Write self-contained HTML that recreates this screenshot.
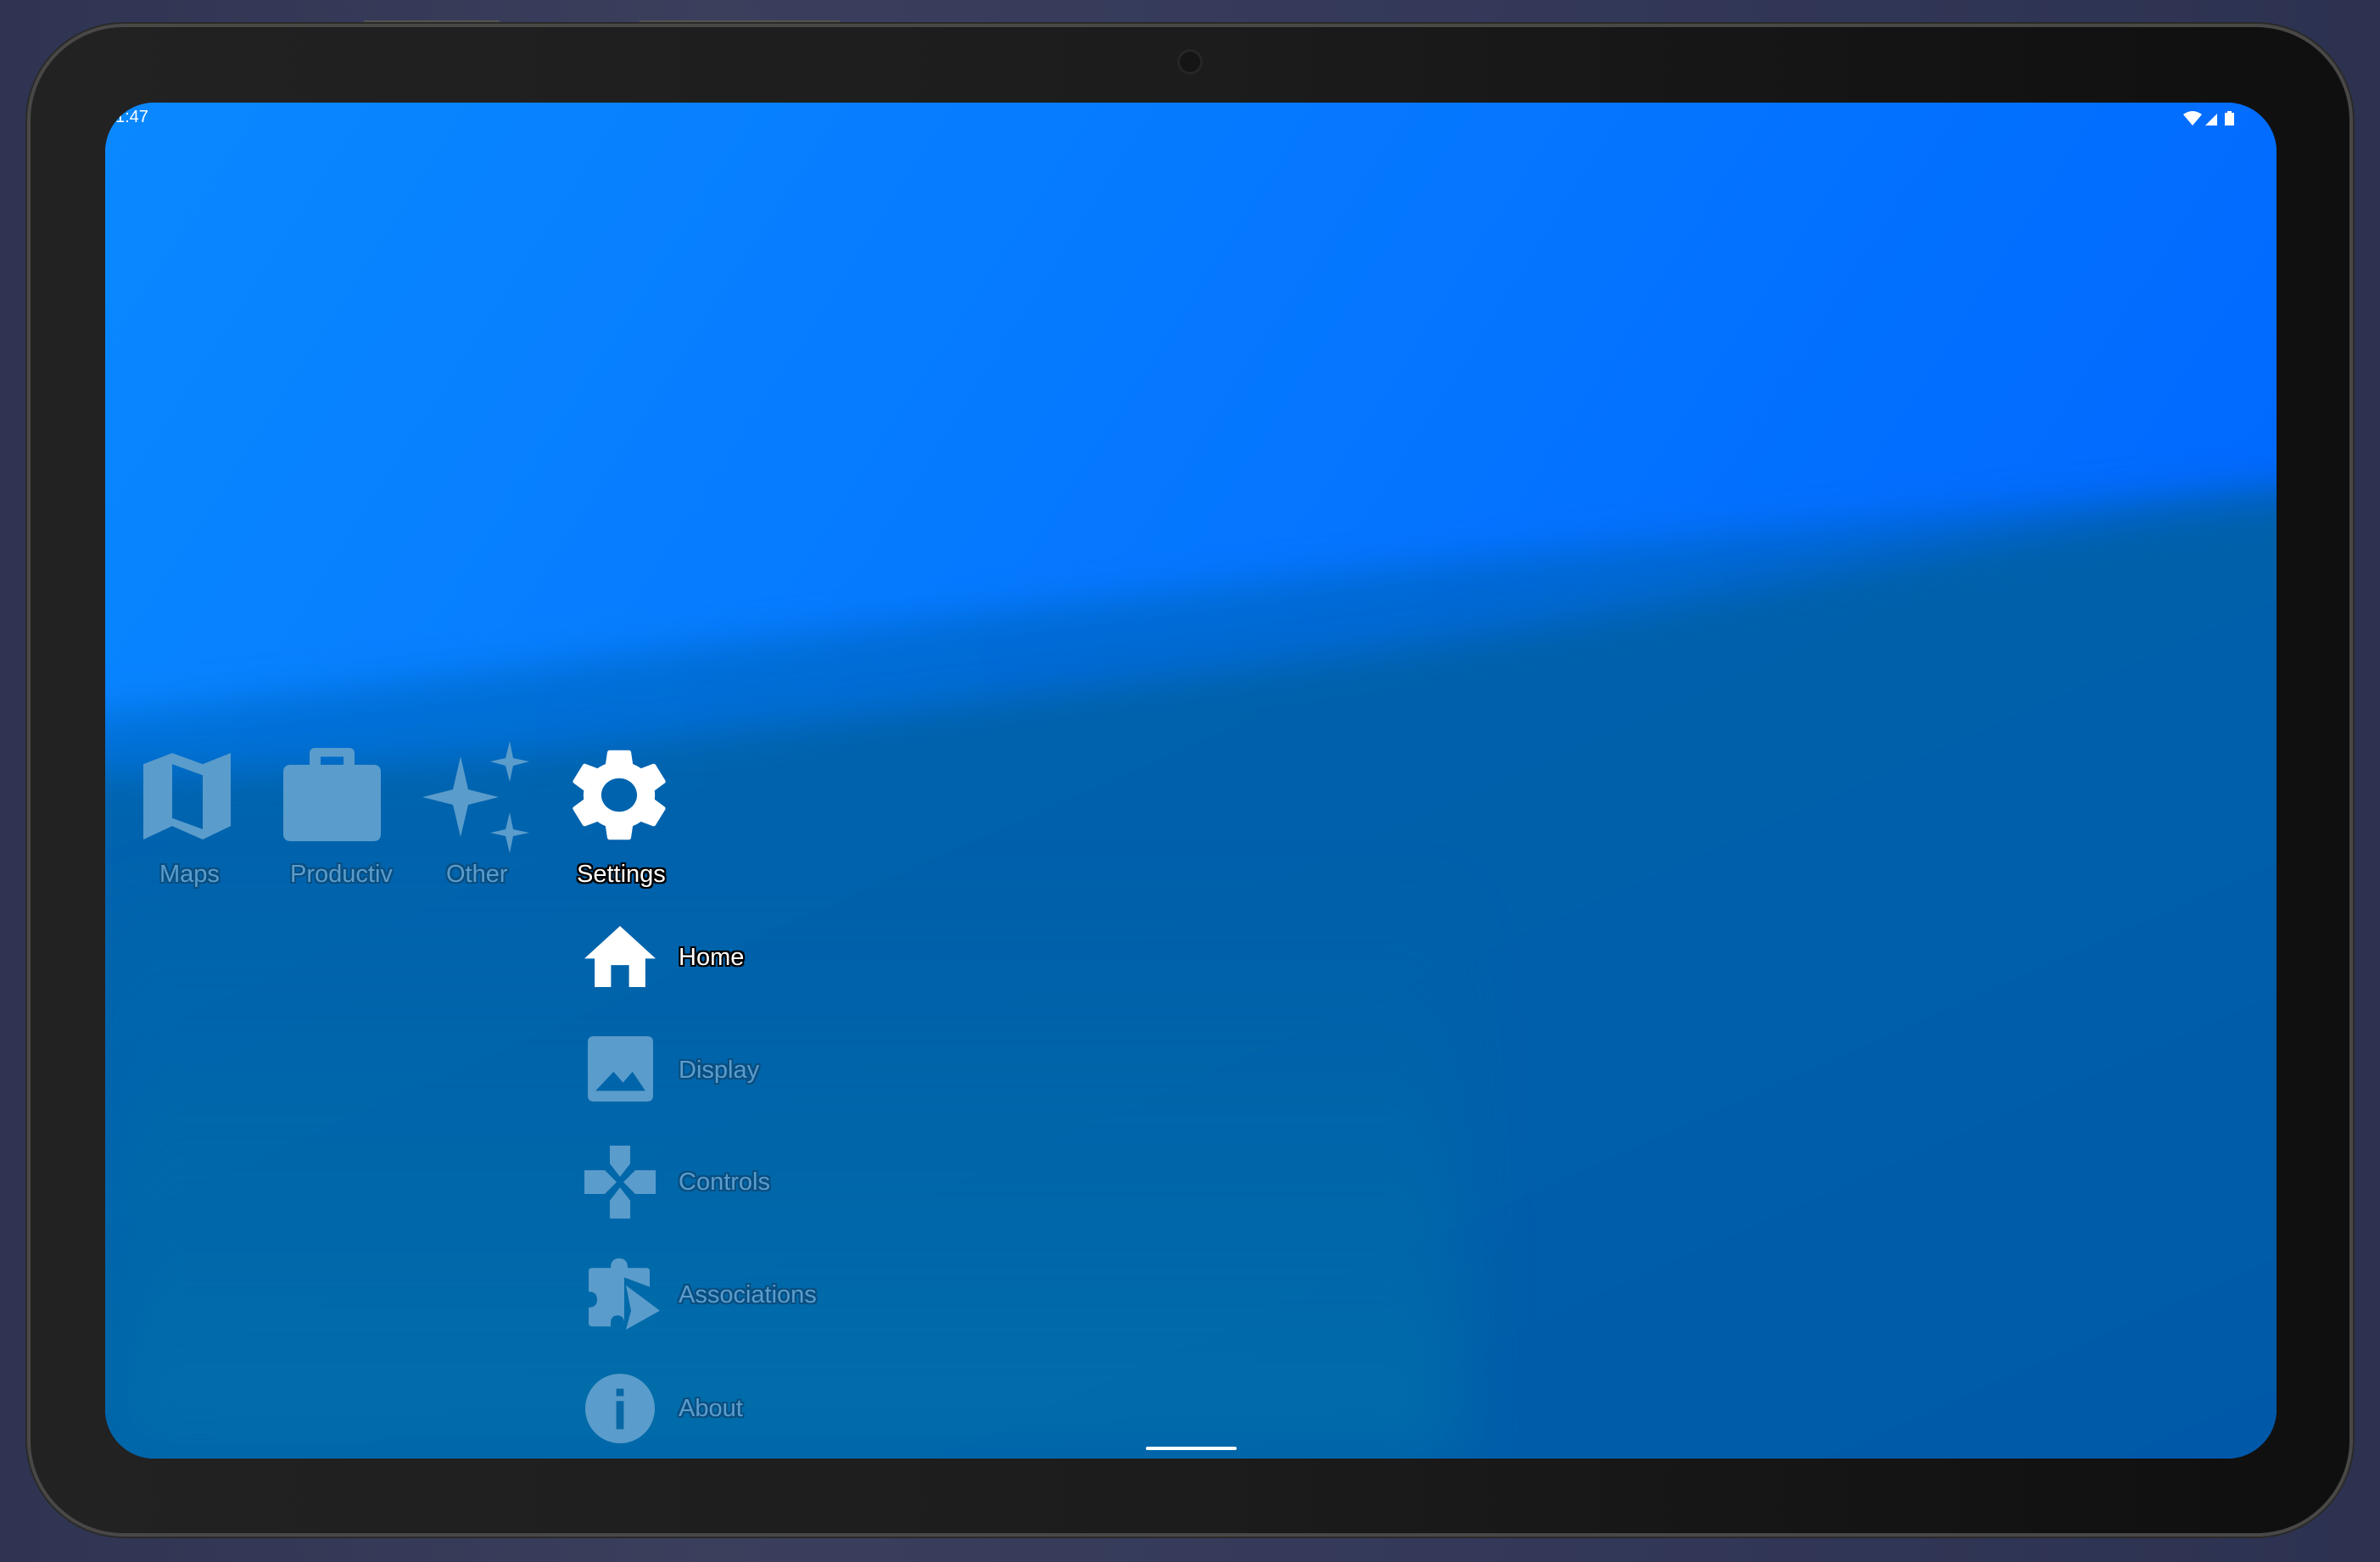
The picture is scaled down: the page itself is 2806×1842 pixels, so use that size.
<!DOCTYPE html>
<html><head><meta charset="utf-8"><style>
html,body{margin:0;padding:0;width:2806px;height:1842px;overflow:hidden;background:#2e3350;}
body{background:linear-gradient(90deg,#2f3452 0%,#3a3f5c 30%,#34395a 60%,#2c3250 100%);position:relative;font-family:"Liberation Sans",sans-serif;}
.tab{position:absolute;left:36px;top:32px;width:2734px;height:1776px;border-radius:110px;background:linear-gradient(90deg,#222 0%,#1c1c1c 50%,#0f0f0f 100%);box-shadow:0 0 0 4px #4a4846,0 0 0 6px #2a2a2a;}
.btn{position:absolute;top:24px;height:6px;background:#55534f;border-radius:3px;}
.screen{position:absolute;left:124px;top:121px;width:2560px;height:1599px;border-radius:58px;overflow:hidden;background:#0a7ff5;}
.cam{position:absolute;left:1391px;top:61px;width:24px;height:24px;border-radius:50%;background:#151515;box-shadow:0 0 0 3px #262626;}
.lbl{position:absolute;font-size:29px;line-height:34px;color:#5a9ccc;white-space:nowrap;text-shadow:-2px 0 #0a4e80,2px 0 #0a4e80,0 -2px #0a4e80,0 2px #0a4e80,-2px -2px #0a4e80,2px 2px #0a4e80,-2px 2px #0a4e80,2px -2px #0a4e80;}
.act{color:#fff;text-shadow:-2px 0 #000,2px 0 #000,0 -2px #000,0 2px #000,-2px -2px #000,2px 2px #000,-2px 2px #000,2px -2px #000;}
svg.i{position:absolute;overflow:visible}
</style></head><body>
<div class="btn" style="left:428px;width:162px"></div>
<div class="btn" style="left:753px;width:238px"></div>
<div class="tab"></div>
<div class="cam"></div>
<div class="screen">
<svg width="2560" height="1599" style="position:absolute;left:0;top:0">
<defs>
<linearGradient id="top" x1="0" y1="0" x2="1" y2="0.4"><stop offset="0" stop-color="#0a88ff"/><stop offset="1" stop-color="#0068ff"/></linearGradient>
<linearGradient id="mid" x1="0" y1="0" x2="1" y2="0"><stop offset="0" stop-color="#0072d8"/><stop offset="1" stop-color="#0062d0"/></linearGradient>
<linearGradient id="low" x1="0" y1="0" x2="1" y2="1"><stop offset="0" stop-color="#0066b0"/><stop offset="0.5" stop-color="#0060aa"/><stop offset="1" stop-color="#0058a8"/></linearGradient>
<linearGradient id="bot" x1="0" y1="0" x2="0" y2="1"><stop offset="0" stop-color="#0070a8" stop-opacity="0"/><stop offset="1" stop-color="#0072aa"/></linearGradient>
<filter id="b" x="-10%" y="-10%" width="120%" height="120%"><feGaussianBlur stdDeviation="22"/></filter>
<filter id="b2"><feGaussianBlur stdDeviation="40"/></filter>
</defs>
<rect width="2560" height="1599" fill="url(#top)"/>
<path d="M-100 730 C 500 680, 1200 560, 2700 440 L2700 1700 L-100 1700 Z" fill="url(#mid)" filter="url(#b)"/>
<path d="M-100 790 C 400 800, 900 720, 1400 660 C 1900 600, 2300 480, 2700 460 L2700 1700 L-100 1700 Z" fill="url(#low)" filter="url(#b)"/>
<rect x="0" y="900" width="1600" height="700" fill="url(#bot)" filter="url(#b2)" opacity="0.8"/>
</svg>
<div style="position:absolute;left:12px;top:6px;color:#fff;font-size:20px;font-family:'Liberation Sans',sans-serif">1:47</div>
<svg class="i" style="left:2450px;top:9px" width="70" height="22" viewBox="0 0 70 22">
<path d="M0 5 Q11 -3 22 5 L11 18 Z" fill="#fff"/>
<path d="M26 18 L40 4 L40 18 Z" fill="#fff"/>
<rect x="49" y="3" width="11" height="15" fill="#fff"/><rect x="52" y="1" width="5" height="3" fill="#fff"/>
</svg>
<div style="position:absolute;left:1227px;top:1585px;width:107px;height:4px;border-radius:2px;background:#fff"></div>
</div>

<svg class="i" style="left:169px;top:888px" width="103" height="102" viewBox="0 0 103 109" preserveAspectRatio="none">
<path d="M0 14 L34 0 L70 14 L103 0 L103 92 L70 109 L34 92 L0 109 Z M34 14 L34 82 L70 96 L70 28 Z" fill="#5a9ccb" fill-rule="evenodd"/>
</svg>
<svg class="i" style="left:334px;top:882px" width="115" height="110" viewBox="0 0 115 116" preserveAspectRatio="none">
<path d="M38 0 H77 Q84 0 84 7 V21 H106 Q115 21 115 30 V107 Q115 116 106 116 H9 Q0 116 0 107 V30 Q0 21 9 21 H31 V7 Q31 0 38 0 Z M44 11 V21 H71 V11 Z" fill="#5a9ccb" fill-rule="evenodd"/>
</svg>
<svg class="i" style="left:498px;top:874px" width="126" height="132" viewBox="0 0 126 132">
<path d="M45 18 L54 57 L90 66 L54 75 L45 113 L36 75 L0 66 L36 57 Z" fill="#5a9ccb"/>
<path d="M103 0 L107 20 L126 24 L107 29 L103 48 L98 29 L80 24 L98 20 Z" fill="#5a9ccb"/>
<path d="M103 84 L107 104 L126 108 L107 112 L103 132 L98 112 L80 108 L98 104 Z" fill="#5a9ccb"/>
</svg>
<svg class="i" style="left:675px;top:882px" width="110" height="111" viewBox="2.6 1.9 18.8 20.2" preserveAspectRatio="none">
<path d="M19.14 12.94c.04-.3.06-.61.06-.94 0-.32-.02-.64-.07-.94l2.03-1.58a.49.49 0 0 0 .12-.61l-1.92-3.32a.488.488 0 0 0-.59-.22l-2.39.96c-.5-.38-1.030-.7-1.62-.94l-.36-2.54a.484.484 0 0 0-.48-.41h-3.84c-.24 0-.43.17-.47.41l-.36 2.54c-.59.24-1.13.57-1.62.94l-2.39-.96c-.22-.08-.47 0-.59.22L2.74 8.87c-.12.21-.08.47.12.61l2.03 1.58c-.05.3-.09.63-.09.94s.02.64.07.94l-2.030 1.58a.49.49 0 0 0-.12.61l1.92 3.32c.12.22.37.29.59.22l2.39-.96c.5.38 1.03.7 1.62.94l.36 2.54c.05.24.24.41.48.41h3.84c.24 0 .44-.17.47-.41l.36-2.54c.59-.24 1.13-.56 1.62-.94l2.39.96c.22.08.47 0 .59-.22l1.92-3.32c.12-.22.07-.47-.12-.61l-2.01-1.58zM12 15.6c-1.98 0-3.6-1.62-3.6-3.6s1.62-3.6 3.6-3.6 3.6 1.620 3.6 3.6-1.62 3.6-3.6 3.6z" fill="#fff"/>
</svg>
<div class="lbl" style="left:188px;top:1014px">Maps</div>
<div class="lbl" style="left:342px;top:1014px;width:122px;overflow:hidden">Productiv</div>
<div class="lbl" style="left:526px;top:1014px">Other</div>
<div class="lbl act" style="left:680px;top:1014px">Settings</div>

<svg class="i" style="left:689px;top:1092px" width="84" height="72" viewBox="0 0 83 75" preserveAspectRatio="none">
<path d="M41.5 0 L83 40 L71 40 L71 75 L52 75 L52 48 L31 48 L31 75 L12 75 L12 40 L0 40 Z" fill="#fff"/>
</svg>
<div class="lbl act" style="left:800px;top:1112px">Home</div>

<svg class="i" style="left:693px;top:1222px" width="77" height="77" viewBox="0 0 76 79" preserveAspectRatio="none">
<path d="M7 0 H69 Q76 0 76 7 V72 Q76 79 69 79 H7 Q0 79 0 72 V7 Q0 0 7 0 Z M9 66 H67 L52 43 L41 56 L30 43 Z" fill="#5a9ccb" fill-rule="evenodd"/>
</svg>
<div class="lbl" style="left:800px;top:1245px">Display</div>

<svg class="i" style="left:689px;top:1351px" width="84" height="86" viewBox="0 0 84 89" preserveAspectRatio="none">
<path d="M30 0 H54 V22 L42 38 L30 22 Z M0 30 H24 L38 44.5 L24 59 H0 Z M84 30 H60 L46 44.5 L60 59 H84 Z M30 89 H54 V67 L42 51 L30 67 Z" fill="#5a9ccb"/>
</svg>
<div class="lbl" style="left:800px;top:1377px">Controls</div>

<svg class="i" style="left:694px;top:1484px" width="84" height="84" viewBox="0 0 84 90" preserveAspectRatio="none">
<path d="M4 12 H26 Q26 0 36 0 Q46 0 46 12 H68 Q72 12 72 16 V36 L42 24 V82 Q42 72 34 72 Q26 72 26 82 V86 H4 Q0 86 0 82 V62 Q10 62 10 52 Q10 42 0 42 V16 Q0 12 4 12 Z" fill="#5a9ccb"/>
<path d="M44 34 L84 66 L44 90 L50 66 Z" fill="#5a9ccb"/>
</svg>
<div class="lbl" style="left:800px;top:1510px">Associations</div>

<svg class="i" style="left:690px;top:1620px" width="82" height="82" viewBox="0 0 84 84">
<circle cx="42" cy="42" r="42" fill="#5a9ccb"/>
<rect x="37.5" y="18" width="9" height="9" fill="#0867a5"/>
<rect x="37.5" y="33" width="9" height="34" fill="#0867a5"/>
</svg>
<div class="lbl" style="left:800px;top:1644px">About</div>
</body></html>
